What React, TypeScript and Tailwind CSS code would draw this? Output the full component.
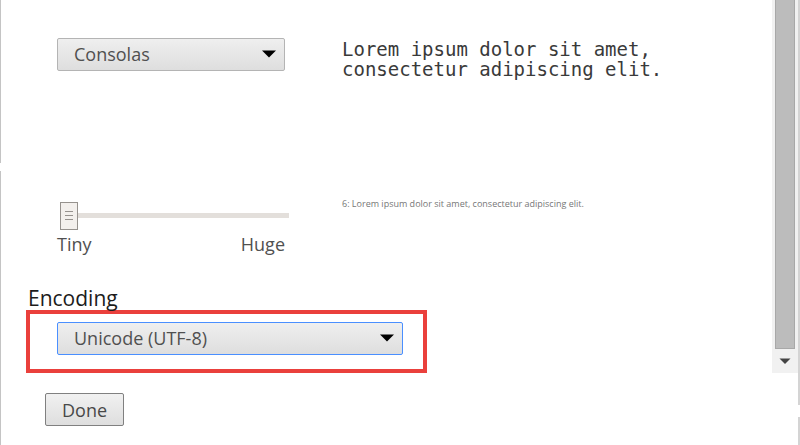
import React, { useState } from 'react'
import clsx from 'clsx'

const fonts = ['Consolas', 'Courier New', 'Monaco']
const encodings = ['Unicode (UTF-8)', 'Unicode (UTF-16LE)', 'Western (ISO-8859-1)']

type DropdownProps = {
    label: string
    options: string[]
    className?: string
}

const Dropdown = ({ label, options, className }: DropdownProps) => {
    const [value, setValue] = useState(options[0])
    return (
        <div className="relative">
            <select
                aria-label={label}
                value={value}
                onChange={(e) => setValue(e.target.value)}
                className={clsx(
                    "block h-[33px] w-full appearance-none rounded-xs border bg-linear-to-b from-[#efefef] to-[#dedede] pb-0.5 pl-4 pr-8 text-lg leading-7 text-[#505050] outline-none",
                    className
                )}
            >
                {options.map((option) => (
                    <option key={option}>{option}</option>
                ))}
            </select>
            <svg className="pointer-events-none absolute right-2 top-3 h-2 w-4" viewBox="0 0 16 8">
                <path d="M1 0.5h14L8 7.5z" fill="#000" />
            </svg>
        </div>
    )
}

const SizeSlider = () => {
    const [size, setSize] = useState(6)
    return (
        <div>
            <input
                type="range"
                aria-label="Minimum font size"
                min={6}
                max={24}
                value={size}
                onChange={(e) => setSize(Number(e.target.value))}
                className={clsx(
                    "ml-[3px] block h-7 w-[229px] appearance-none bg-transparent outline-none",
                    "[&::-webkit-slider-runnable-track]:h-[5px] [&::-webkit-slider-runnable-track]:bg-[#e3dfdb]",
                    "[&::-webkit-slider-thumb]:-mt-[11px] [&::-webkit-slider-thumb]:h-7 [&::-webkit-slider-thumb]:w-[18px] [&::-webkit-slider-thumb]:appearance-none",
                    "[&::-webkit-slider-thumb]:border [&::-webkit-slider-thumb]:border-[#96928e] [&::-webkit-slider-thumb]:bg-[#f3f0ed]",
                    "[&::-webkit-slider-thumb]:bg-[repeating-linear-gradient(#96928e_0_1px,#f3f0ed_1px_4px)] [&::-webkit-slider-thumb]:bg-[length:8px_9px] [&::-webkit-slider-thumb]:bg-center [&::-webkit-slider-thumb]:bg-no-repeat"
                )}
            />
            <div className="mt-[3px] flex justify-between text-lg leading-6 text-[#505050]">
                <span>Tiny</span>
                <span>Huge</span>
            </div>
        </div>
    )
}

const ScrollBar = () => (
    <div className="flex w-[26px] shrink-0 flex-col self-start bg-[#f1f1f1]">
        <div className="mx-[3px] h-[349px] border-x border-b border-[#a8a8a8] bg-[#bcbcbc]" />
        <svg className="h-6 w-full" viewBox="0 0 26 24">
            <path d="M7.5 9.5h11L13 15z" fill="#444" />
        </svg>
    </div>
)

const App = () => {
    return (
        <div className="flex min-h-screen w-full bg-white font-['Open_Sans','Noto_Sans',sans-serif]">
            {/* window edge, left */}
            <div className="flex w-px shrink-0 flex-col gap-2">
                <div className="h-[163px] bg-[#c4c4c4]" />
                <div className="flex-1 bg-[#c4c4c4]" />
            </div>

            <main className="min-w-0 flex-1 pb-4 pt-[38px]">
                <div className="grid grid-cols-[228px_1fr] gap-x-[57px] pl-14">
                    <Dropdown label="Fixed-width font" options={fonts} className="border-[#b4b4b4]" />
                    <p className="max-w-[340px] pt-px font-['DejaVu_Sans_Mono',monospace] text-[19px] leading-5 text-[#3a3a3a]">
                        Lorem ipsum dolor sit amet, consectetur adipiscing elit.
                    </p>
                </div>

                <div className="mt-[122px] grid grid-cols-[228px_1fr] gap-x-[57px] pl-14">
                    <SizeSlider />
                    <p className="text-[9px] leading-[6px] text-[#777]">
                        6: Lorem ipsum dolor sit amet, consectetur adipiscing elit.
                    </p>
                </div>

                <h2 className="mt-[30px] pl-[27px] text-[21px] leading-6 text-[#1c1c1c]">Encoding</h2>
                <div className="ml-[25px] w-[401px] border-4 border-[#ea403c] pb-3.5 pl-[27px] pr-5 pt-2">
                    <Dropdown label="Encoding" options={encodings} className="border-[#4a8fff]" />
                </div>

                <button
                    type="button"
                    className="ml-11 mt-5 block h-[33px] rounded-xs border border-[#808080] bg-linear-to-b from-[#f1f1f1] to-[#dedede] px-4 text-lg leading-6 text-[#484848]"
                >
                    Done
                </button>
            </main>

            <ScrollBar />

            {/* window edge, right */}
            <div className="flex w-[2px] shrink-0 flex-col gap-3">
                <div className="h-[405px] bg-[#d4d4d4]" />
                <div className="flex-1 bg-[#d4d4d4]" />
            </div>
        </div>
    )
}

export default App
